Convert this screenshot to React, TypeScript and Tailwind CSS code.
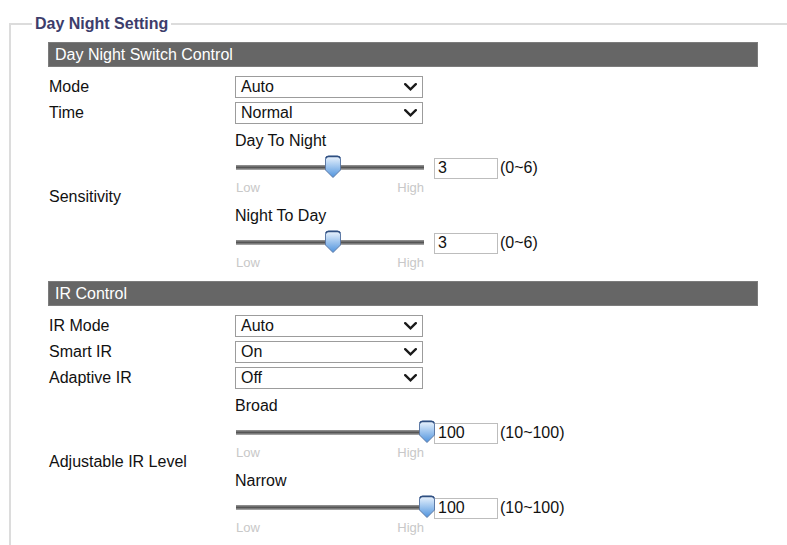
import React from "react";

type SliderProps = {
  title: string;
  value: number;
  min: number;
  max: number;
};

const TRACK_WIDTH = 188;

function Chevron() {
  return (
    <svg width="13" height="8" viewBox="0 0 13 8" className="shrink-0">
      <path d="M1.2 1.2 L6.5 6.3 L11.8 1.2" fill="none" stroke="#1a1a1a" strokeWidth="2.4" strokeLinecap="round" />
    </svg>
  );
}

function Dropdown({ value }: { value: string }) {
  return (
    <div className="flex h-[22px] w-[188px] items-center justify-between border border-[#9c9c9c] bg-white pl-[5px] pr-[5px] text-[16px] leading-none text-[#111]">
      <span>{value}</span>
      <Chevron />
    </div>
  );
}

function Thumb() {
  return (
    <svg width="18" height="24" viewBox="0 0 18 24">
      <defs>
        <linearGradient id="thumbFill" x1="0" y1="0" x2="0" y2="1">
          <stop offset="0" stopColor="#eef5fd" />
          <stop offset="0.35" stopColor="#b5d3f3" />
          <stop offset="1" stopColor="#4f93dd" />
        </linearGradient>
      </defs>
      <path
        d="M1.5 4 Q1.5 1 4.5 1 H13.5 Q16.5 1 16.5 4 V15 L9 22.5 L1.5 15 Z"
        fill="url(#thumbFill)"
        stroke="#5d7aa6"
        strokeWidth="1"
      />
      <path d="M2 3.2 Q2.5 1.5 4.5 1.5 H13.5 Q15.5 1.5 16 3.2" fill="none" stroke="#2f4f80" strokeWidth="1.6" />
    </svg>
  );
}

function RangeSlider({ title, value, min, max }: SliderProps) {
  const frac = (value - min) / (max - min);
  return (
    <div className="flex flex-col">
      <div className="h-5 text-[16px] leading-5 text-[#111]">{title}</div>
      <div className="mt-[6px] flex h-[22px] items-center">
        <div className="relative ml-px h-[22px] w-[188px]">
          <div className="absolute left-0 right-0 top-[8px] h-[5px] bg-gradient-to-b from-[#9a9a9a] via-[#555] to-[#b4b4b4]" />
          <div className="absolute top-[-2px]" style={{ left: frac * TRACK_WIDTH - 6 }}>
            <Thumb />
          </div>
        </div>
        <div className="ml-[10px] flex h-[21px] w-[64px] items-center border border-[#bdbdbd] pl-[3px] text-[16px] text-[#111]">
          {value}
        </div>
        <span className="ml-[2px] text-[16px] text-[#111]">
          ({min}~{max})
        </span>
      </div>
      <div className="ml-px mt-[2px] flex h-[13px] w-[188px] justify-between text-[13px] leading-[13px] text-[#c8c8c8]">
        <span>Low</span>
        <span>High</span>
      </div>
    </div>
  );
}

function SectionBar({ title }: { title: string }) {
  return (
    <div className="flex h-[25px] w-[710px] items-center border border-[#7c7c7c] bg-[#666] px-[6px] text-[16px] text-white">
      {title}
    </div>
  );
}

function Row({ label, children }: { label: string; children: React.ReactNode }) {
  return (
    <div className="grid grid-cols-[187px_1fr] items-center">
      <div className="pl-px text-[16px] leading-[22px] text-[#111]">{label}</div>
      <div>{children}</div>
    </div>
  );
}

function SliderPair({ items }: { items: SliderProps[] }) {
  return (
    <div className="mt-[7px] flex flex-col gap-[12px]">
      {items.map((s) => (
        <RangeSlider key={s.title} {...s} />
      ))}
    </div>
  );
}

export default function App() {
  return (
    <div className="h-[545px] w-[787px] overflow-hidden bg-white pl-[9px] pt-[15px]" style={{ fontFamily: '"Liberation Sans", Arial, sans-serif' }}>
      <fieldset className="w-[820px] border-2 border-[#dcdcdc] pb-10 pl-[21px] pt-[9px]">
        <legend className="px-[3px] text-[16px] font-bold leading-[18px] text-[#3d3d6b]">Day Night Setting</legend>

        <div className="pl-[16px]">
          {/* day / night switching */}
          <SectionBar title="Day Night Switch Control" />
          <div className="mt-[9px] flex flex-col gap-[4px]">
            <Row label="Mode">
              <Dropdown value="Auto" />
            </Row>
            <Row label="Time">
              <Dropdown value="Normal" />
            </Row>
          </div>
          <Row label="Sensitivity">
            <SliderPair
              items={[
                { title: "Day To Night", value: 3, min: 0, max: 6 },
                { title: "Night To Day", value: 3, min: 0, max: 6 },
              ]}
            />
          </Row>

          {/* infrared */}
          <div className="mt-[12px]">
            <SectionBar title="IR Control" />
          </div>
          <div className="mt-[9px] flex flex-col gap-[4px]">
            <Row label="IR Mode">
              <Dropdown value="Auto" />
            </Row>
            <Row label="Smart IR">
              <Dropdown value="On" />
            </Row>
            <Row label="Adaptive IR">
              <Dropdown value="Off" />
            </Row>
          </div>
          <Row label="Adjustable IR Level">
            <SliderPair
              items={[
                { title: "Broad", value: 100, min: 10, max: 100 },
                { title: "Narrow", value: 100, min: 10, max: 100 },
              ]}
            />
          </Row>
        </div>
      </fieldset>
    </div>
  );
}
